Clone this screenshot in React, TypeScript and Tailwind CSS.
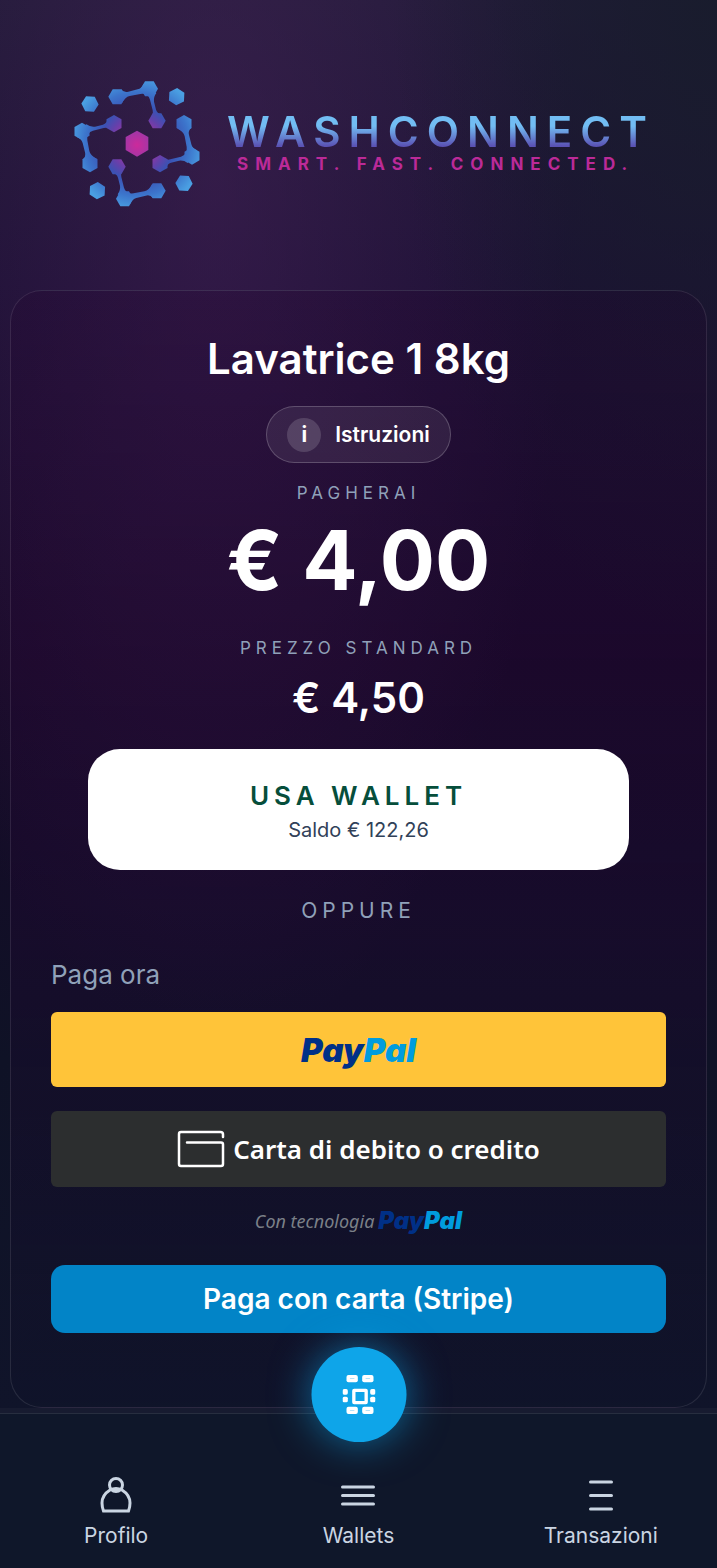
import type { ReactNode } from "react";
import clsx from "clsx";

// tilt 0 puts the points left and right, 30 puts them top and bottom
const hexagon = (cx: number, cy: number, tilt = 0) =>
  [0, 60, 120, 180, 240, 300]
    .map((deg) => {
      const rad = ((deg + tilt) * Math.PI) / 180;
      return `${cx + 26 * Math.cos(rad)},${cy + 26 * Math.sin(rad)}`;
    })
    .join(" ");

const LogoMark = () => (
  <svg viewBox="43 43 378 381" className="w-[126px] shrink-0" aria-hidden="true">
    <defs>
      <radialGradient id="node" gradientUnits="userSpaceOnUse" cx="232" cy="234" r="200">
        <stop offset="0.3" stopColor="#8a38a4" />
        <stop offset="0.42" stopColor="#6341ab" />
        <stop offset="0.56" stopColor="#3a52b4" />
        <stop offset="0.78" stopColor="#3c74cb" />
        <stop offset="1" stopColor="#4a9fe2" />
      </radialGradient>
      <radialGradient id="core" gradientUnits="userSpaceOnUse" cx="232" cy="238" r="40">
        <stop offset="0" stopColor="#cc2a9b" />
        <stop offset="1" stopColor="#a236a6" />
      </radialGradient>
    </defs>
    {[0, 90, 180, 270].map((angle) => (
      <g key={angle} transform={`rotate(${angle} 232 234)`} fill="url(#node)">
        <polygon points={hexagon(172, 93)} />
        <polygon points={hexagon(269, 69)} />
        <polygon points={hexagon(292, 165)} />
        <polygon points={hexagon(351, 93, 33)} />
        <path d="M184 70 Q192 82 206 78 L234 71 Q246 68 252 54 L290 82 Q281 94 283 108 L289 132 Q293 144 306 146 L276 152 Q282 144 279 134 L271 102 Q265 82 242 85 L210 91 Q196 94 186 114 Z" />
      </g>
    ))}
    <polygon points="232,195 266,214 266,253 232,273 198,253 198,214" fill="url(#core)" />
  </svg>
);

const PayPalMark = ({ small }: { small?: boolean }) => (
  <span
    className={clsx(
      "font-['Inter',sans-serif] font-black italic",
      small ? "text-[24px] leading-7" : "text-[33px] leading-10"
    )}
  >
    <span className="text-[#003087]">Pay</span>
    <span className="text-[#009cde]">Pal</span>
  </span>
);

const CardIcon = () => (
  <svg viewBox="0 0 48 38" className="w-12" fill="none" stroke="#fff" strokeWidth="2.5" strokeLinecap="round" aria-hidden="true">
    <path d="M46 7V4.500Q46 2 43.500 2H4Q2 2 2 4V34Q2 36 4 36H44Q46 36 46 34V14.500Q46 12.500 44 12.500H10" />
  </svg>
);

const QrIcon = () => (
  <svg viewBox="153 135 99 117" className="w-[33px]" fill="#fff" aria-hidden="true">
    {[165, 212].map((x) =>
      [135, 230].map((y) => (
        <g key={`${x}-${y}`}>
          <rect x={x} y={y} width="34" height="22" rx="6" />
          <rect x={x + 10} y={y + 10} width="14" height="2" rx="1" fill="#9bd8f7" />
        </g>
      ))
    )}
    {[153, 236].map((x) =>
      [177, 200].map((y) => <rect key={`${x}-${y}`} x={x} y={y} width="16" height="17" rx="5" />)
    )}
    <rect x="187" y="181" width="37" height="37" rx="1" fill="none" stroke="#fff" strokeWidth="10" />
  </svg>
);

type NavItemProps = {
  label: string;
  children: ReactNode;
};

const NavItem = ({ label, children }: NavItemProps) => (
  <a href="#" className="flex flex-col items-center gap-1.5 text-[21px] leading-7 text-slate-300">
    <svg viewBox="0 0 40 40" className="size-10" fill="none" stroke="currentColor" strokeWidth="3" strokeLinecap="round" aria-hidden="true">
      {children}
    </svg>
    {label}
  </a>
);

export default function App() {
  return (
    <div className="min-h-screen bg-[#0f172a] font-['Inter',sans-serif]">
      <div className="bg-[radial-gradient(ellipse_at_100%_0%,rgba(24,28,44,0.9)_0%,transparent_32%),radial-gradient(ellipse_at_30%_13%,rgba(78,36,96,0.45)_0%,transparent_50%),linear-gradient(180deg,#211b38_0%,#1c1134_20%,#190a29_47%,#130d27_60%,#0f1226_75%,#10142a_100%)]">
        <header className="flex items-center justify-center gap-[27px] pt-20 pb-[83px] pl-3">
          <LogoMark />
          <div className="whitespace-nowrap">
            <div className="bg-[linear-gradient(180deg,#72bdf3_35%,#5a52b4_85%)] bg-clip-text text-[42px] leading-10 font-semibold tracking-[8px] text-transparent">
              WASHCONNECT
            </div>
            <div className="pl-2.5 text-[17px] leading-6 font-bold tracking-[7px] text-[#bb2a98]">
              SMART. FAST. CONNECTED.
            </div>
          </div>
        </header>

        <main className="px-2.5">
          <section className="flex flex-col items-center rounded-[32px] border border-white/10 bg-[linear-gradient(180deg,rgba(36,2,46,0.2)_0%,rgba(32,8,50,0.4)_55%,rgba(16,20,42,0.2)_100%)] px-10 pt-11 pb-[74px]">
            <h1 className="text-[42px] leading-12 font-semibold text-white">Lavatrice 1 8kg</h1>
            <button className="mt-[23px] flex h-[57px] items-center gap-3.5 rounded-full border border-white/20 bg-white/8 px-5 text-[21px] font-semibold text-white">
              <span className="flex size-[34px] items-center justify-center rounded-full bg-white/15 font-bold">i</span>
              Istruzioni
            </button>

            <p className="mt-[18px] text-[17px] leading-6 tracking-[5px] text-slate-400">PAGHERAI</p>
            <p className="mt-2 text-[82px] leading-24 font-bold text-white">€ 4,00</p>
            <p className="mt-[27px] text-[17px] leading-6 tracking-[5px] text-slate-400">PREZZO STANDARD</p>
            <p className="mt-3.5 text-[42px] leading-12 font-semibold text-white">€ 4,50</p>

            <div className="mt-[27px] w-full px-[37px]">
              <button className="flex w-full flex-col items-center gap-1 rounded-[32px] bg-white pt-[31px] pb-[26px]">
                <span className="text-[26px] leading-8 font-semibold tracking-[5px] text-[#064e3b]">USA WALLET</span>
                <span className="text-[20px] leading-7 text-slate-700">Saldo € 122,26</span>
              </button>
            </div>

            <p className="mt-[27px] text-[21px] leading-7 tracking-[5px] text-slate-400">OPPURE</p>
            <p className="mt-[34px] self-start text-[26px] leading-8 text-slate-400">Paga ora</p>

            <button aria-label="PayPal" className="mt-[21px] flex h-[75px] w-full items-center justify-center rounded-md bg-[#ffc439]">
              <PayPalMark />
            </button>
            <button className="mt-6 flex h-[76px] w-full items-center justify-center gap-2 rounded-md bg-[#2c2e2f] font-['Noto_Sans',sans-serif] text-[26px] font-semibold text-white">
              <CardIcon />
              Carta di debito o credito
            </button>
            <p className="mt-5 flex items-center gap-1 font-['Noto_Sans',sans-serif] text-[18px] leading-7 text-[#7b8088]">
              <em>Con tecnologia</em>
              <PayPalMark small />
            </p>
            <button className="mt-[30px] h-17 w-full rounded-[14px] bg-[#0284c7] text-[28px] font-semibold text-white">
              Paga con carta (Stripe)
            </button>
          </section>
        </main>
        <div className="h-[5px] bg-white/3" />
      </div>

      <nav className="relative border-t border-white/10 bg-[#0f172a] px-2.5 pt-[62px] pb-4">
        <button
          aria-label="Scansiona QR"
          className="absolute -top-[67px] left-1/2 flex size-[95px] -translate-x-1/2 items-center justify-center rounded-full bg-[#0ea5e9] shadow-[0_0_40px_rgba(14,165,233,0.6)]"
        >
          <QrIcon />
        </button>
        <div className="grid grid-cols-3 gap-[30px]">
          <NavItem label="Profilo">
            <circle cx="20" cy="9" r="6.500" />
            <path d="M14 14Q6 19 6 27Q6 31 7.500 35H32.500Q34 31 34 27Q34 19 26 14Q20 11 14 14Z" />
          </NavItem>
          <NavItem label="Wallets">
            <path d="M4.500 11H35.500M4.500 19.500H35.500M4.500 28H35.500" />
          </NavItem>
          <NavItem label="Transazioni">
            <path d="M9.500 6H30.500M9.500 19.500H30.500M9.500 33H30.500" />
          </NavItem>
        </div>
      </nav>
    </div>
  );
}
